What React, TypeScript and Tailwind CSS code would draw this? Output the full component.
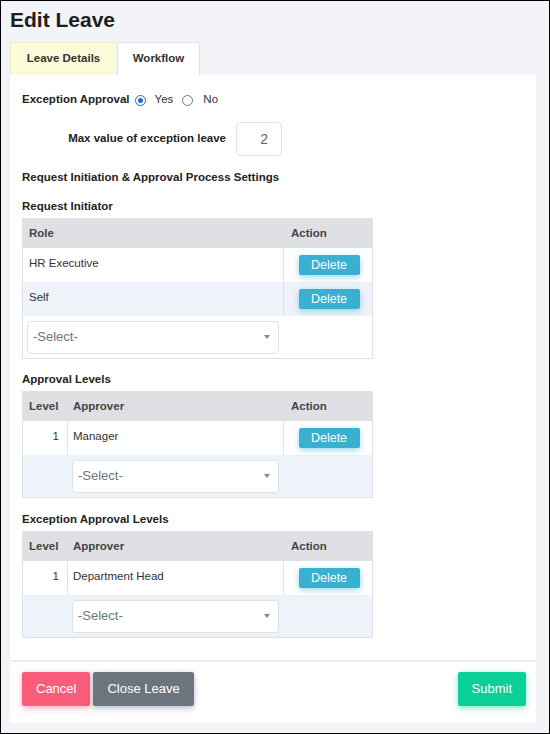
import React from "react";

interface LevelRow {
  level: number;
  name: string;
}

const initiators = ["HR Executive", "Self"];
const approvalLevels: LevelRow[] = [{ level: 1, name: "Manager" }];
const exceptionLevels: LevelRow[] = [{ level: 1, name: "Department Head" }];

function DeleteButton() {
  return (
    <button className="w-[61px] h-[20px] bg-[#39afd1] text-white text-[12.5px] leading-[20px] rounded-[2px] shadow-[0_2px_6px_0_rgba(57,175,209,0.5)]">
      Delete
    </button>
  );
}

function SelectBox() {
  return (
    <div className="h-[33px] border border-[#dee2e6] rounded-[4px] bg-white flex items-center justify-between pl-[5px] pr-[8px] text-[13px] text-[#6c757d]">
      <span>-Select-</span>
      <span className="w-0 h-0 border-x-[3px] border-x-transparent border-t-[4px] border-t-[#888]" />
    </div>
  );
}

function Radio({ checked }: { checked?: boolean }) {
  return checked ? (
    <span className="w-[11px] h-[11px] rounded-full border-[1.5px] border-[#1a6fd6] flex items-center justify-center">
      <span className="w-[5px] h-[5px] rounded-full bg-[#1a6fd6]" />
    </span>
  ) : (
    <span className="block w-[11px] h-[11px] rounded-full border border-[#767676] bg-white" />
  );
}

function SectionLabel({ children, className }: { children: React.ReactNode; className: string }) {
  return <div className={`h-[16px] leading-[16px] font-bold text-[#222] ${className}`}>{children}</div>;
}

function RoleTable() {
  return (
    <div className="w-[351px] border border-[#dee2e6]">
      <div className="flex h-[29px] bg-[#dfe0e4] font-bold text-[#444] items-center">
        <div className="w-[260px] pl-[6px]">Role</div>
        <div className="w-[89px] pl-[8px]">Action</div>
      </div>
      {initiators.map((role, i) => (
        <div key={role} className={`flex h-[34px] ${i % 2 === 1 ? "bg-[#eef2f9]" : "bg-white"}`}>
          <div className="w-[260px] pl-[6px] pt-[7px] leading-[17px] text-[#333]">{role}</div>
          <div className="w-[89px] border-l border-[#dee2e6] flex items-center justify-center pl-[2px]">
            <DeleteButton />
          </div>
        </div>
      ))}
      <div className="flex h-[42px] bg-white items-center">
        <div className="w-[260px] pl-[4px] pr-[4px]">
          <SelectBox />
        </div>
      </div>
    </div>
  );
}

function LevelTable({ rows }: { rows: LevelRow[] }) {
  return (
    <div className="w-[351px] border border-[#dee2e6]">
      <div className="flex h-[29px] bg-[#dfe0e4] font-bold text-[#444] items-center">
        <div className="w-[44px] pl-[6px]">Level</div>
        <div className="w-[216px] pl-[6px]">Approver</div>
        <div className="w-[89px] pl-[8px]">Action</div>
      </div>
      {rows.map((row) => (
        <div key={row.name} className="flex h-[34px] bg-white">
          <div className="w-[44px] pr-[8px] pt-[7px] leading-[17px] text-right text-[#333]">{row.level}</div>
          <div className="w-[216px] border-l border-[#dee2e6] pl-[5px] pt-[7px] leading-[17px] text-[#333]">
            {row.name}
          </div>
          <div className="w-[89px] border-l border-[#dee2e6] flex items-center justify-center pl-[2px]">
            <DeleteButton />
          </div>
        </div>
      ))}
      <div className="flex h-[42px] bg-[#eef2f9] items-center">
        <div className="w-[44px]" />
        <div className="w-[216px] pl-[5px] pr-[4px]">
          <SelectBox />
        </div>
      </div>
    </div>
  );
}

export default function App() {
  return (
    <div className="w-[550px] h-[734px] border border-black bg-[#f2f4f8] px-[9px] overflow-hidden font-['Liberation_Sans',Arial,sans-serif] text-[11.5px] text-[#333]">
      <h1 className="pt-[6px] text-[21px] leading-[25px] font-bold text-[#1e1e1e]">Edit Leave</h1>

      <div className="flex mt-[10px] h-[33px] text-[11.5px] font-bold text-[#333]">
        <div className="w-[106px] bg-[#fbfbd9] border-l border-t border-[#ecebb8] flex items-center justify-center">
          Leave Details
        </div>
        <div className="w-[83px] ml-[1px] bg-white border border-b-0 border-[#dee2e6] rounded-t-[4px] flex items-center justify-center">
          Workflow
        </div>
      </div>

      <div className="w-[526px] bg-white px-[12px] pt-[15px] pb-[22px] shadow-[0_1px_2px_rgba(0,0,0,0.06)]">
        <div className="flex items-center h-[20px]">
          <span className="font-bold text-[#222]">Exception Approval</span>
          <span className="ml-[5px]">
            <Radio checked />
          </span>
          <span className="ml-[9px]">Yes</span>
          <span className="ml-[9px]">
            <Radio />
          </span>
          <span className="ml-[10px]">No</span>
        </div>

        <div className="flex items-center mt-[12px] h-[34px]">
          <div className="w-[204px] text-right font-bold text-[#222]">Max value of exception leave</div>
          <div className="ml-[10px] w-[46px] h-[34px] border border-[#dee2e6] rounded-[4px] flex items-center justify-end pr-[13px] text-[14px] text-[#666]">
            2
          </div>
        </div>

        <SectionLabel className="mt-[13px]">Request Initiation &amp; Approval Process Settings</SectionLabel>

        <SectionLabel className="mt-[13px] mb-[4px]">Request Initiator</SectionLabel>
        <RoleTable />

        <SectionLabel className="mt-[12px] mb-[4px]">Approval Levels</SectionLabel>
        <LevelTable rows={approvalLevels} />

        <SectionLabel className="mt-[13px] mb-[4px]">Exception Approval Levels</SectionLabel>
        <LevelTable rows={exceptionLevels} />
      </div>

      <div className="w-[526px] h-[61px] mt-[2px] bg-white rounded-[3px] flex items-start justify-between pt-[10px] pl-[12px] pr-[10px] text-[13px] text-white">
        <div className="flex">
          <button className="h-[34px] px-[14px] bg-[#fa5c7c] rounded-[2px] shadow-[0_2px_6px_0_rgba(250,92,124,0.5)]">
            Cancel
          </button>
          <button className="h-[34px] ml-[3px] px-[14px] bg-[#6c757d] rounded-[2px] shadow-[0_2px_6px_0_rgba(108,117,125,0.5)]">
            Close Leave
          </button>
        </div>
        <button className="h-[34px] px-[14px] bg-[#0acf97] rounded-[2px] shadow-[0_2px_6px_0_rgba(10,207,151,0.5)]">
          Submit
        </button>
      </div>
    </div>
  );
}
